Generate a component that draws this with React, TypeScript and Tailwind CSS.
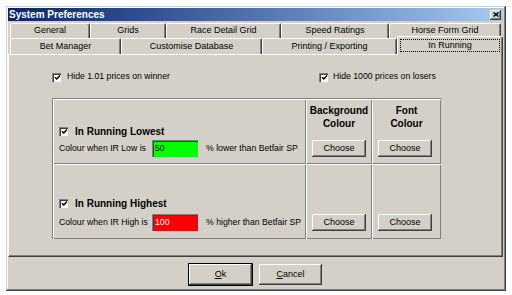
import React from 'react';

const raised =
  'bg-[#d4d0c8] shadow-[inset_-1px_-1px_#404040,inset_1px_1px_#ffffff,inset_-2px_-2px_#808080]';

const Check: React.FC = () => (
  <span className="flex h-[9px] w-[9px] shrink-0 items-center justify-center border-t border-l border-[#808080] border-r-white border-b-white bg-white shadow-[inset_1px_1px_#404040]">
    <svg width="7" height="7" viewBox="0 0 7 7">
      <path d="M1 3.2 L2.8 5 L6 1.6" fill="none" stroke="#000" strokeWidth="1.5" />
    </svg>
  </span>
);

const Btn: React.FC<{ label: React.ReactNode; w?: string; def?: boolean }> = ({ label, w = 'w-[54px]', def }) => (
  <div
    className={`${w} flex items-center justify-center text-[9px] text-black ${raised} ${
      def ? 'h-[21px] outline outline-1 outline-black' : 'h-[17px]'
    }`}
  >
    {label}
  </div>
);

const Tab: React.FC<{ label: string; w: string; selected?: boolean }> = ({ label, w, selected }) => (
  <div
    className={`${w} flex items-center justify-center rounded-t-[2px] border-l border-t border-white border-r border-r-[#404040] bg-[#d4d0c8] text-[9px] text-black shadow-[inset_-1px_0_#808080] ${
      selected ? 'relative z-10 -mb-[2px] -mt-[2px] h-[19px] pb-[1px]' : 'h-full'
    }`}
  >
    {selected ? (
      <span className="flex h-[13px] w-[100px] items-center justify-center border border-dotted border-black">{label}</span>
    ) : (
      label
    )}
  </div>
);

const App: React.FC = () => {
  return (
    <div className="h-[295px] w-[512px] overflow-hidden bg-white pt-[6px] pl-[6px] font-['Liberation_Sans',Arial,sans-serif]">
      <div className="flex h-[285px] w-[500px] flex-col bg-[#d4d0c8] pt-[2px] pr-[3px] pb-[3px] pl-[2px] shadow-[inset_-1px_-1px_#404040,inset_1px_1px_#d4d0c8,inset_-2px_-2px_#808080,inset_2px_2px_#ffffff]">
        {/* title bar */}
        <div className="flex h-[13px] items-center justify-between bg-linear-to-r from-[#0a246a] to-[#a6caf0] pl-[1px] pr-[2px]">
          <span className="text-[10px] font-bold leading-none text-white">System Preferences</span>
          <div className={`flex h-[10px] w-[11px] items-center justify-center ${raised}`}>
            <svg width="6" height="5" viewBox="0 0 6 5">
              <path d="M0.5 0.5 L5.5 4.5 M5.5 0.5 L0.5 4.5" stroke="#000" strokeWidth="1.4" />
            </svg>
          </div>
        </div>

        {/* tabs */}
        <div className="mt-[2px] flex h-[15px] pl-[2px]">
          <Tab label="General" w="w-[80px]" />
          <Tab label="Grids" w="w-[76px]" />
          <Tab label="Race Detail Grid" w="w-[115px]" />
          <Tab label="Speed Ratings" w="w-[108px]" />
          <Tab label="Horse Form Grid" w="w-[112px]" />
        </div>
        <div className="flex h-[16px] pl-[2px]">
          <Tab label="Bet Manager" w="w-[111px]" />
          <Tab label="Customise Database" w="w-[141px]" />
          <Tab label="Printing / Exporting" w="w-[135px]" />
          <Tab label="In Running" w="w-[106px]" selected />
        </div>

        {/* panel */}
        <div className="h-[203px] border-l border-t border-white border-r border-b border-r-[#404040] border-b-[#404040] pl-[43px] text-[8.7px] text-black shadow-[inset_-1px_-1px_#808080]">
          <div className="mt-[16px] flex h-[12px] items-center">
            <label className="flex w-[267px] items-center gap-[6px]">
              <Check />
              <span>Hide 1.01 prices on winner</span>
            </label>
            <label className="flex items-center gap-[5px]">
              <Check />
              <span>Hide 1000 prices on losers</span>
            </label>
          </div>

          <div className="mt-[15px] grid w-[390px] grid-cols-[253px_66px_69px] grid-rows-[65px_75px] border-l border-t border-[#808080] border-r-white border-b-white">
            {/* row 1 */}
            <div className="flex flex-col justify-end pb-[7px] pl-[6px] shadow-[inset_1px_1px_#ffffff,inset_-1px_-1px_#808080]">
              <div className="flex h-[12px] items-center gap-[7px]">
                <Check />
                <span className="text-[10px] font-bold">In Running Lowest</span>
              </div>
              <div className="mt-[3px] flex h-[17px] items-center">
                <span className="w-[93px]">Colour when IR Low is</span>
                <div className="flex h-full w-[46px] items-center border-l border-t border-[#808080] border-r-white border-b-white bg-[#00ff00] pl-[2px] shadow-[inset_1px_1px_#404040]">
                  50
                </div>
                <span className="ml-[8px]">% lower than Betfair SP</span>
              </div>
            </div>
            <div className="flex flex-col justify-between pt-[5px] pb-[7px] pl-[6px] shadow-[inset_1px_1px_#ffffff,inset_-1px_-1px_#808080]">
              <div className="-ml-[6px] text-center text-[10px] font-bold leading-[13px]">
                Background
                <br />
                Colour
              </div>
              <Btn label="Choose" />
            </div>
            <div className="flex flex-col justify-between pt-[5px] pb-[7px] pl-[6px] shadow-[inset_1px_1px_#ffffff,inset_-1px_-1px_#808080]">
              <div className="-ml-[6px] text-center text-[10px] font-bold leading-[13px]">
                Font
                <br />
                Colour
              </div>
              <Btn label="Choose" />
            </div>

            {/* row 2 */}
            <div className="flex flex-col justify-end pb-[8px] pl-[6px] shadow-[inset_1px_1px_#ffffff,inset_-1px_-1px_#808080]">
              <div className="flex h-[12px] items-center gap-[7px]">
                <Check />
                <span className="text-[10px] font-bold">In Running Highest</span>
              </div>
              <div className="mt-[5px] flex h-[17px] items-center">
                <span className="w-[93px]">Colour when IR High is</span>
                <div className="flex h-full w-[46px] items-center border-l border-t border-[#808080] border-r-white border-b-white bg-[#ff0000] pl-[2px] text-white shadow-[inset_1px_1px_#404040]">
                  100
                </div>
                <span className="ml-[8px]">% higher than Betfair SP</span>
              </div>
            </div>
            <div className="flex flex-col justify-end pb-[8px] pl-[6px] shadow-[inset_1px_1px_#ffffff,inset_-1px_-1px_#808080]">
              <Btn label="Choose" />
            </div>
            <div className="flex flex-col justify-end pb-[8px] pl-[6px] shadow-[inset_1px_1px_#ffffff,inset_-1px_-1px_#808080]">
              <Btn label="Choose" />
            </div>
          </div>
        </div>

        {/* buttons */}
        <div className="mt-[7px] flex justify-center gap-[7px]">
          <Btn
            def
            w="w-[63px]"
            label={
              <span>
                <span className="underline">O</span>k
              </span>
            }
          />
          <Btn
            w="w-[63px] !h-[21px]"
            label={
              <span>
                <span className="underline">C</span>ancel
              </span>
            }
          />
        </div>
      </div>
    </div>
  );
};

export default App;
